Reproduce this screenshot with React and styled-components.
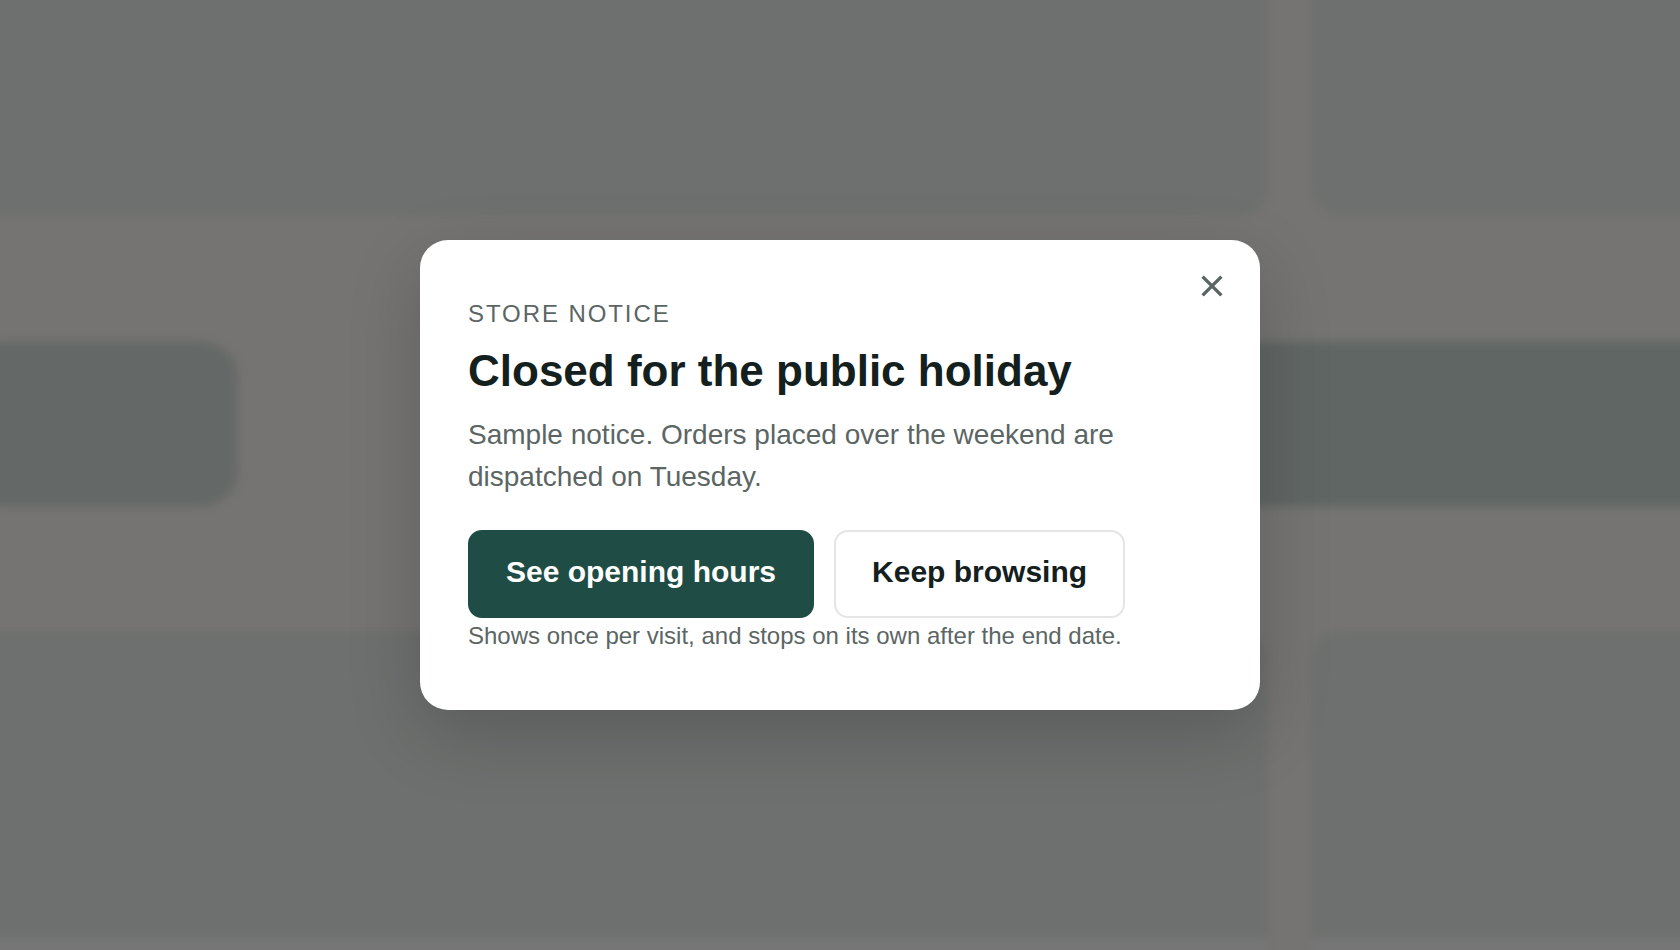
import React from 'react';
import styled, { createGlobalStyle } from 'styled-components';

const GlobalStyle = createGlobalStyle`
  *,
  *::before,
  *::after {
    box-sizing: border-box;
  }

  body {
    margin: 0;
    background: #757472;
    font-family: 'Liberation Sans', Arial, sans-serif;
    color: #14201e;
    overflow: hidden;
  }
`;

const Page = styled.div`
  min-height: 100vh;
  display: grid;
  overflow: hidden;

  > * {
    grid-area: 1 / 1;
  }
`;

/* the shop behind the notice, out of focus and bleeding past the window */
const Shop = styled.div`
  display: flex;
  flex-direction: column;
  height: calc(100vh + 40px);
  margin: -20px -68px -20px -40px;
  overflow: hidden;
  filter: blur(4px);
`;

const ProductRow = styled.div`
  flex: none;
  display: grid;
  grid-template-columns: 3fr 1fr;
  gap: 44px;
`;

const Product = styled.div`
  height: ${({ $last }) => ($last ? '360px' : '234px')};
  background: ${({ $last }) => ($last ? '#767676' : '#6d706e')};
  border-radius: ${({ $last }) => ($last ? '28px 28px 0 0' : '0 0 28px 28px')};
  overflow: hidden;
`;

const ProductImage = styled.div`
  height: 305px;
  background: #6d706e;
`;

const Filters = styled.div`
  flex: none;
  display: grid;
  grid-template-columns: 278px 1fr;
  gap: 640px;
  padding: 128px 0 126px;
`;

const Filter = styled.div`
  height: 164px;
  border-radius: 36px;
  background: ${({ $active }) => ($active ? '#606664' : '#646967')};
`;

const Overlay = styled.div`
  display: flex;
  align-items: center;
  justify-content: center;
  padding: 24px;
  z-index: 1;
`;

const Dialog = styled.section`
  position: relative;
  width: 100%;
  max-width: 840px;
  padding: 56px 48px;
  border-radius: 28px;
  background: #ffffff;
  box-shadow: 0 24px 72px rgba(0, 0, 0, 0.18);
`;

const CloseButton = styled.button`
  position: absolute;
  top: 24px;
  right: 26px;
  display: flex;
  align-items: center;
  justify-content: center;
  width: 44px;
  height: 44px;
  padding: 0;
  border: 0;
  background: none;
  color: #5b6664;
  cursor: pointer;
`;

const Eyebrow = styled.p`
  margin: 0 0 12px;
  font-size: 24px;
  line-height: 36px;
  letter-spacing: 0.08em;
  text-transform: uppercase;
  color: #5b6664;
`;

const Title = styled.h2`
  margin: 0 0 16px;
  font-size: 44px;
  line-height: 54px;
  font-weight: 700;
`;

const Message = styled.p`
  max-width: 680px;
  margin: 0 0 32px;
  font-size: 28px;
  line-height: 42px;
  color: #5b6664;
`;

const Actions = styled.div`
  display: flex;
  flex-wrap: wrap;
  gap: 20px;
`;

const Button = styled.button`
  padding: 22px 36px 26px;
  border: 2px solid ${({ $primary }) => ($primary ? '#1f4d45' : '#e4e6e5')};
  border-radius: 14px;
  background: ${({ $primary }) => ($primary ? '#1f4d45' : '#ffffff')};
  color: ${({ $primary }) => ($primary ? '#ffffff' : '#14201e')};
  font-family: inherit;
  font-size: 30px;
  line-height: 36px;
  font-weight: 700;
  cursor: pointer;
`;

const Footnote = styled.p`
  margin: 0;
  font-size: 24px;
  line-height: 36px;
  color: #5b6664;
`;

const App = () => {
  return (
    <Page>
      <GlobalStyle />
      <Shop aria-hidden="true">
        <ProductRow>
          <Product />
          <Product />
        </ProductRow>
        <Filters>
          <Filter />
          <Filter $active />
        </Filters>
        <ProductRow>
          <Product $last>
            <ProductImage />
          </Product>
          <Product $last>
            <ProductImage />
          </Product>
        </ProductRow>
      </Shop>

      <Overlay>
        <Dialog role="dialog" aria-modal="true" aria-labelledby="notice-title">
          <CloseButton type="button" aria-label="Close">
            <svg width="24" height="24" viewBox="0 0 24 24" fill="none" stroke="currentColor" strokeWidth="3.4">
              <path d="M2.6 2.6l18.8 18.8M21.4 2.6L2.6 21.4" />
            </svg>
          </CloseButton>
          <Eyebrow>Store notice</Eyebrow>
          <Title id="notice-title">Closed for the public holiday</Title>
          <Message>Sample notice. Orders placed over the weekend are dispatched on Tuesday.</Message>
          <Actions>
            <Button type="button" $primary>See opening hours</Button>
            <Button type="button">Keep browsing</Button>
          </Actions>
          <Footnote>Shows once per visit, and stops on its own after the end date.</Footnote>
        </Dialog>
      </Overlay>
    </Page>
  );
};

export default App;
